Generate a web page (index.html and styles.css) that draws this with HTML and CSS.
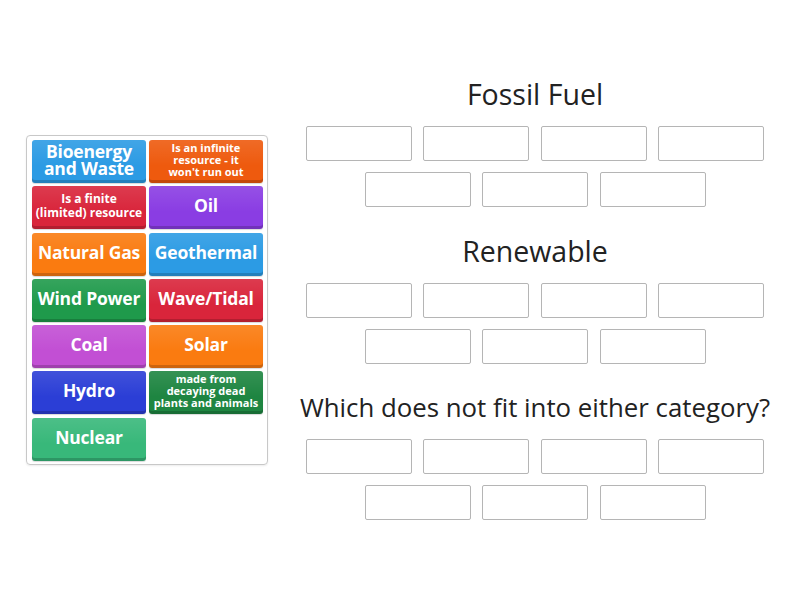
FILE: index.html
```html
<!DOCTYPE html>
<html>
<head>
<meta charset="utf-8">
<link rel="stylesheet" href="styles.css">
</head>
<body>
<div class="page">
  <div class="bank">
    <div class="tile blue">Bioenergy and Waste</div>
    <div class="tile orangered small">Is an infinite resource - it won't run out</div>
    <div class="tile red small2">Is a finite (limited) resource</div>
    <div class="tile purple">Oil</div>
    <div class="tile orange">Natural Gas</div>
    <div class="tile blue">Geothermal</div>
    <div class="tile green">Wind Power</div>
    <div class="tile red">Wave/Tidal</div>
    <div class="tile magenta">Coal</div>
    <div class="tile orange">Solar</div>
    <div class="tile indigo">Hydro</div>
    <div class="tile darkgreen small3">made from decaying dead plants and animals</div>
    <div class="tile teal">Nuclear</div>
  </div>
  <div class="groups">
    <div class="group">
      <h2 class="title">Fossil Fuel</h2>
      <div class="row"><div class="slot"></div><div class="slot"></div><div class="slot"></div><div class="slot"></div></div>
      <div class="row"><div class="slot"></div><div class="slot"></div><div class="slot"></div></div>
    </div>
    <div class="group">
      <h2 class="title">Renewable</h2>
      <div class="row"><div class="slot"></div><div class="slot"></div><div class="slot"></div><div class="slot"></div></div>
      <div class="row"><div class="slot"></div><div class="slot"></div><div class="slot"></div></div>
    </div>
    <div class="group">
      <h2 class="title long">Which does not fit into either category?</h2>
      <div class="row"><div class="slot"></div><div class="slot"></div><div class="slot"></div><div class="slot"></div></div>
      <div class="row"><div class="slot"></div><div class="slot"></div><div class="slot"></div></div>
    </div>
  </div>
</div>
</body>
</html>
```
FILE: styles.css
```css
html, body {
  margin: 0;
  padding: 0;
  background: #fff;
  font-family: "Open Sans", "Liberation Sans", sans-serif;
}
.page {
  display: flex;
  align-items: flex-start;
  padding-left: 26px;
  width: 800px;
  height: 600px;
  box-sizing: border-box;
}
.bank {
  margin-top: 135px;
  width: 242px;
  box-sizing: border-box;
  border: 1px solid #c8c8c8;
  border-radius: 4px;
  padding: 4px 4px 3px 5px;
  display: grid;
  grid-template-columns: 114px 114px;
  column-gap: 3px;
  row-gap: 3.3px;
  box-shadow: 0 1px 2px rgba(0,0,0,0.08);
}
.tile {
  height: 43px;
  border-radius: 3px;
  color: #fff;
  font-weight: 700;
  font-size: 17.5px;
  line-height: 17px;
  display: flex;
  align-items: center;
  justify-content: center;
  text-align: center;
  padding: 0 2px 4px;
  box-sizing: border-box;
  box-shadow: inset 0 -3px 0 rgba(0,0,0,0.18), 0 1px 1px rgba(0,0,0,0.15);
  background-image: linear-gradient(rgba(255,255,255,0.1), rgba(255,255,255,0) 60%);
  letter-spacing: -0.2px;
}
.tile.small {
  font-size: 11px;
  line-height: 12px;
  padding: 0 14px 4px;
  letter-spacing: 0;
}
.tile.small2 {
  font-size: 12px;
  line-height: 14px;
  padding: 0 2.5px 4px;
  letter-spacing: 0;
}
.tile.small3 {
  font-size: 11px;
  line-height: 12px;
  padding: 0 4px 4px;
  letter-spacing: 0;
}
.blue { background-color: #2c9be4; }
.orangered { background-color: #ee5a0e; }
.red { background-color: #d9253b; }
.purple { background-color: #8a3de3; }
.orange { background-color: #fa7b10; }
.green { background-color: #1f9a4b; }
.magenta { background-color: #c24fd4; }
.indigo { background-color: #2b3ed6; }
.darkgreen { background-color: #1e8541; }
.teal { background-color: #38b87a; }

.groups {
  margin-left: 32px;
  margin-top: 76px;
  width: 470px;
  display: flex;
  flex-direction: column;
  gap: 25.5px;
}
.group {
  display: flex;
  flex-direction: column;
  align-items: center;
}
.title {
  margin: 0 0 14px;
  font-weight: 400;
  font-size: 28.5px;
  line-height: 36px;
  color: #222;
  white-space: nowrap;
}
.title.long {
  font-size: 25.8px;
}
.row {
  display: flex;
  justify-content: center;
  gap: 11.5px;
}
.row + .row { margin-top: 11px; }
.slot {
  width: 106px;
  height: 35px;
  box-sizing: border-box;
  border: 1px solid #b5b5b5;
  border-radius: 2px;
  background: #fff;
}
```
